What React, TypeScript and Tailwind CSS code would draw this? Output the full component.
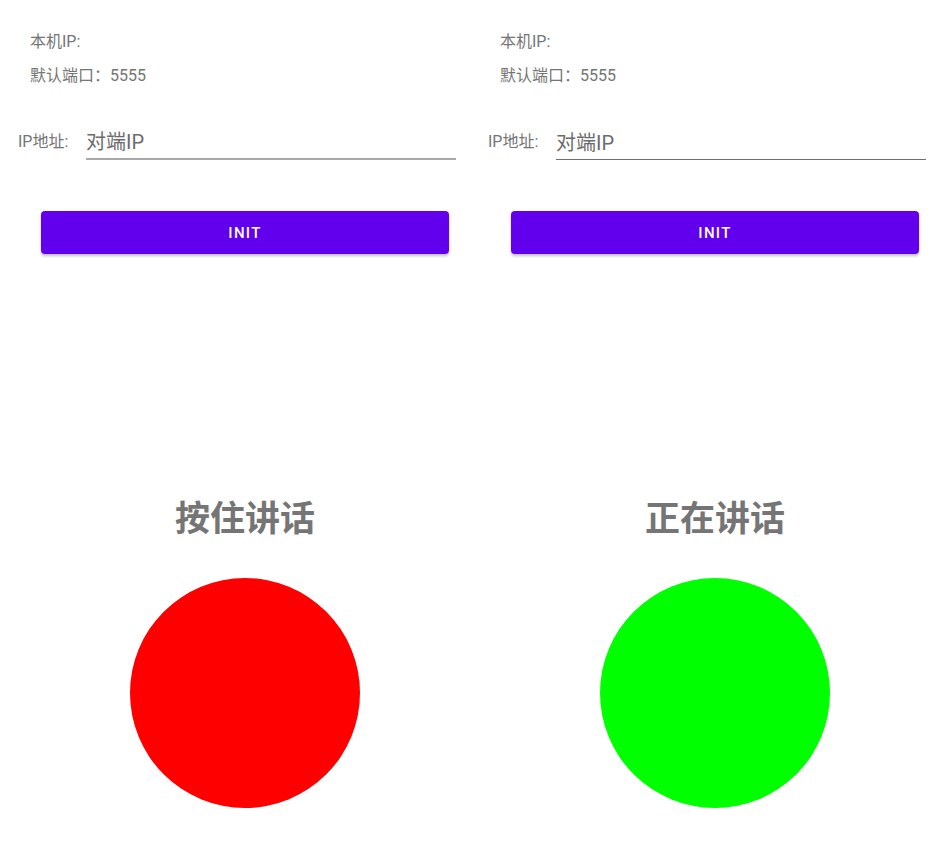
const fontStack = '"Roboto", "Noto Sans CJK SC", sans-serif';

const Panel = ({
    title,
    circle,
    line,
    width,
}: {
    title: string;
    circle: string;
    line: string;
    width: string;
}) => {
    return (
        <div className={`${width} shrink-0 overflow-hidden pt-[32px]`}>
            {/* Info */}
            <p className="ml-[30px] h-5 text-[16px] leading-5 text-[#757575]">本机IP:</p>
            <p className="ml-[30px] mt-[14px] h-5 text-[16px] leading-5 text-[#757575]">默认端口：5555</p>

            {/* Peer address */}
            <div className="mt-[38px] flex items-center">
                <span className="ml-[18px] w-[68px] text-[16px] leading-5 text-[#757575]">IP地址:</span>
                <input
                    className={`h-9 w-[370px] bg-transparent pt-[2px] text-[20px] text-[#555] outline-none placeholder:text-[#6b6b6b] ${line}`}
                    style={{ fontFamily: fontStack }}
                    placeholder="对端IP"
                />
            </div>

            {/* Init */}
            <button className="ml-[41px] mt-[51px] flex h-[43px] w-[408px] items-center justify-center rounded-[4px] bg-[#6200ee] pt-[2px] text-[15px] font-medium tracking-[1.3px] text-white shadow-[0_2px_3px_rgba(0,0,0,0.25)]">
                INIT
            </button>

            {/* Talk */}
            <div className="ml-[130px] mt-[246px] flex w-[230px] flex-col items-center">
                <h2 className="text-[35px] font-bold leading-10 text-[#757575]">{title}</h2>
                <div className={`mt-[38px] h-[230px] w-[230px] rounded-full ${circle}`} />
            </div>
        </div>
    );
};

export default function App() {
    return (
        <div className="flex h-[843px] w-[930px] overflow-hidden bg-white" style={{ fontFamily: fontStack }}>
            <Panel title="按住讲话" circle="bg-[#ff0000]" line="border-b-2 border-[#a8a8a8]" width="w-[470px]" />
            <Panel title="正在讲话" circle="bg-[#00ff00]" line="border-b border-[#6f6f6f]" width="w-[460px]" />
        </div>
    );
}
